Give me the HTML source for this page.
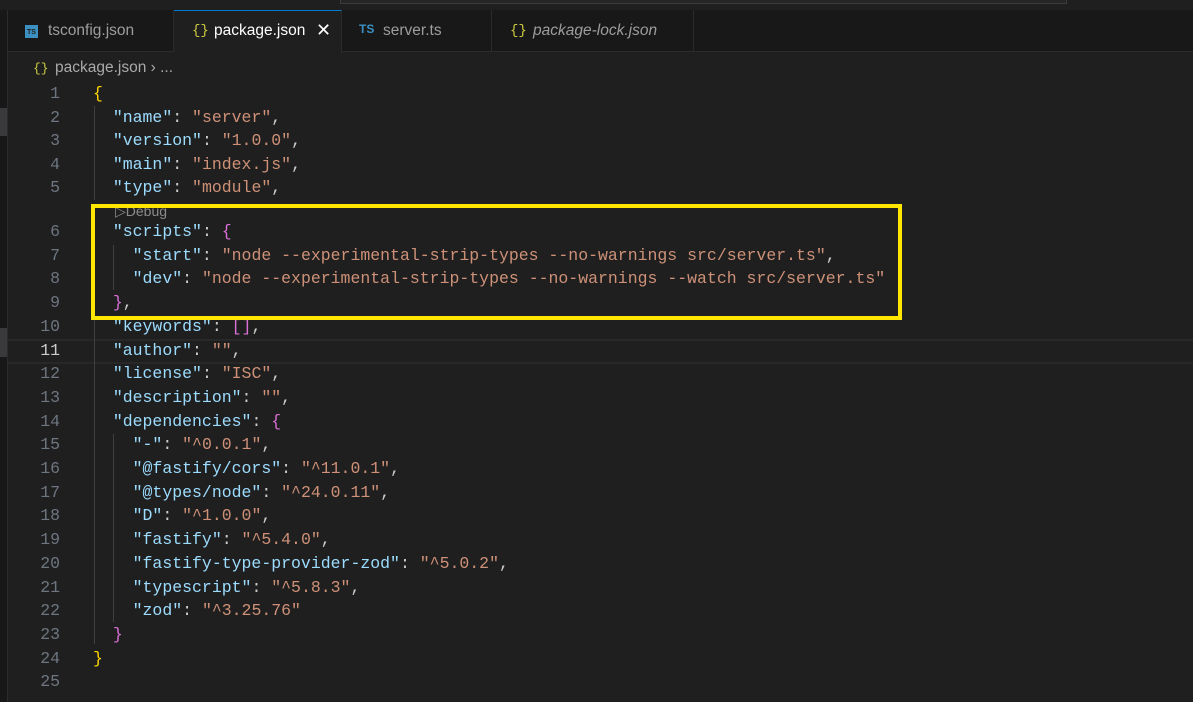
<!DOCTYPE html><html><head><style>
body{margin:0;width:1193px;height:702px;background:#1f1f1f;overflow:hidden;position:relative;font-family:"Liberation Sans",sans-serif}
.a{position:absolute;white-space:nowrap}
.code{font-family:"Liberation Mono",monospace;font-size:16.5px;white-space:pre;color:#cccccc}
.k{color:#9cdcfe}.s{color:#ce9178}.y{color:#ffd700}.p{color:#da70d6}.b{color:#179fff}
.ln{position:absolute;left:20px;width:40px;text-align:right;color:#6e7681;font-family:"Liberation Mono",monospace;font-size:16.5px}
.tab{position:absolute;top:10px;height:42px;border-right:1px solid #2b2b2b;box-sizing:border-box}
.tl{position:absolute;top:22px;font-size:15.5px;color:#9d9d9d;white-space:nowrap}
</style></head><body>
<div class="a" style="left:0;top:0;width:1193px;height:10px;background:#1f1f1f"></div>
<div class="a" style="left:340px;top:0;width:725px;height:3px;border:1px solid #3c3c3c;border-top:none;background:#262626"></div>
<div class="a" style="left:0;top:10px;width:1193px;height:42px;background:#181818;border-bottom:1px solid #2b2b2b;box-sizing:border-box"></div>
<div class="a" style="left:0;top:10px;width:7px;height:692px;background:#181818;border-right:1px solid #2b2b2b"></div>
<div class="a" style="left:0;top:108px;width:7px;height:28px;background:#3a3a3c"></div>
<div class="a" style="left:0;top:328px;width:7px;height:29px;background:#3a3a3c"></div>
<div class="tab" style="left:8px;width:166px"></div>
<div class="tab" style="left:174px;width:168px;background:#1f1f1f;border-top:1px solid #0078d4;height:43px"></div>
<div class="tab" style="left:342px;width:150px"></div>
<div class="tab" style="left:492px;width:202px"></div>
<div class="a" style="left:25px;top:25px;width:13px;height:13px;background:#3c8fc1;color:#1f1f1f;font-size:7px;line-height:15px;text-align:center;font-weight:bold">TS</div>
<div class="tl" style="left:48px">tsconfig.json</div>
<div class="tl" style="left:192px;color:#cbcb41;font-size:14px;top:23px;font-family:'Liberation Mono',monospace">{}</div>
<div class="tl" style="left:214px;color:#fff">package.json</div>
<div class="tl" style="left:316px;color:#fff;font-size:18px;top:20px">✕</div>
<div class="tl" style="left:359px;color:#3c8fc1;font-size:12px;font-weight:bold;top:22px">TS</div>
<div class="tl" style="left:383px">server.ts</div>
<div class="tl" style="left:510px;color:#cbcb41;font-size:14px;top:23px;font-family:'Liberation Mono',monospace">{}</div>
<div class="tl" style="left:533px;font-style:italic">package-lock.json</div>
<div class="a" style="left:33px;top:61px;font-size:13px;color:#cbcb41;font-family:'Liberation Mono',monospace">{}</div>
<div class="a" style="left:55px;top:59px;font-size:15.5px;color:#a9a9a9">package.json › ...</div>
<div class="a" style="left:8px;top:339px;width:1185px;height:21px;border-top:2px solid #282828;border-bottom:2px solid #282828"></div>
<div class="a" style="left:94px;top:106px;width:1px;height:94px;background:#404040"></div>
<div class="a" style="left:94px;top:244px;width:1px;height:400px;background:#404040"></div>
<div class="a" style="left:113px;top:245px;width:1px;height:45px;background:#404040"></div>
<div class="a" style="left:113px;top:434px;width:1px;height:188px;background:#404040"></div>
<div class="a" style="left:115px;top:203px;font-size:14px;color:#8b8b8b">▷Debug</div>
<div id="c"></div>
<script>
var L=[
[1,'<span class=y>{</span>'],
[2,'  <span class=k>"name"</span>: <span class=s>"server"</span>,'],
[3,'  <span class=k>"version"</span>: <span class=s>"1.0.0"</span>,'],
[4,'  <span class=k>"main"</span>: <span class=s>"index.js"</span>,'],
[5,'  <span class=k>"type"</span>: <span class=s>"module"</span>,'],
[6,'  <span class=k>"scripts"</span>: <span class=p>{</span>'],
[7,'    <span class=k>"start"</span>: <span class=s>"node --experimental-strip-types --no-warnings src/server.ts"</span>,'],
[8,'    <span class=k>"dev"</span>: <span class=s>"node --experimental-strip-types --no-warnings --watch src/server.ts"</span>'],
[9,'  <span class=p>}</span>,'],
[10,'  <span class=k>"keywords"</span>: <span class=p>[]</span>,'],
[11,'  <span class=k>"author"</span>: <span class=s>""</span>,'],
[12,'  <span class=k>"license"</span>: <span class=s>"ISC"</span>,'],
[13,'  <span class=k>"description"</span>: <span class=s>""</span>,'],
[14,'  <span class=k>"dependencies"</span>: <span class=p>{</span>'],
[15,'    <span class=k>"-"</span>: <span class=s>"^0.0.1"</span>,'],
[16,'    <span class=k>"@fastify/cors"</span>: <span class=s>"^11.0.1"</span>,'],
[17,'    <span class=k>"@types/node"</span>: <span class=s>"^24.0.11"</span>,'],
[18,'    <span class=k>"D"</span>: <span class=s>"^1.0.0"</span>,'],
[19,'    <span class=k>"fastify"</span>: <span class=s>"^5.4.0"</span>,'],
[20,'    <span class=k>"fastify-type-provider-zod"</span>: <span class=s>"^5.0.2"</span>,'],
[21,'    <span class=k>"typescript"</span>: <span class=s>"^5.8.3"</span>,'],
[22,'    <span class=k>"zod"</span>: <span class=s>"^3.25.76"</span>'],
[23,'  <span class=p>}</span>'],
[24,'<span class=y>}</span>'],
[25,'']];
var h='';L.forEach(function(l){var n=l[0];var y=n<=5?84+(n-1)*23.6:84+5*23.6+20+(n-6)*23.7;
h+='<div class="ln" style="top:'+y+'px;'+(n==11?'color:#cccccc':'')+'">'+n+'</div><div class="a code" style="left:93px;top:'+y+'px">'+l[1]+'</div>';});
document.getElementById('c').innerHTML=h;
</script>
<div class="a" style="left:91px;top:204px;width:811px;height:116px;border:4px solid #ffe600;box-sizing:border-box"></div>
</body></html>
